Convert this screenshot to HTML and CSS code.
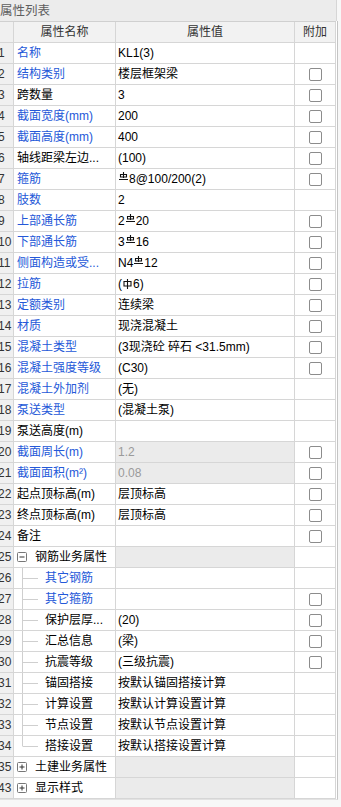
FILE: index.html
```html
<!DOCTYPE html>
<html lang="zh-CN">
<head>
  <meta charset="UTF-8">
  <meta name="viewport" content="width=device-width, initial-scale=1.0">
  <title>属性列表</title>
  <link rel="stylesheet" href="styles.css">
</head>
<body>

<div class="panel">
  <div class="title">属性列表</div>

  <div class="grid">
    <div class="row head">
      <div class="num"></div>
      <div class="hcell">属性名称</div>
      <div class="hcell">属性值</div>
      <div class="hcell">附加</div>
    </div>

    <div class="row"><div class="num">1</div><div class="name blue">名称</div><div class="val">KL1(3)</div><div class="add"></div></div>
    <div class="row"><div class="num">2</div><div class="name blue">结构类别</div><div class="val">楼层框架梁</div><div class="add"><span class="chk"></span></div></div>
    <div class="row"><div class="num">3</div><div class="name">跨数量</div><div class="val">3</div><div class="add"><span class="chk"></span></div></div>
    <div class="row"><div class="num">4</div><div class="name blue">截面宽度(mm)</div><div class="val">200</div><div class="add"><span class="chk"></span></div></div>
    <div class="row"><div class="num">5</div><div class="name blue">截面高度(mm)</div><div class="val">400</div><div class="add"><span class="chk"></span></div></div>
    <div class="row"><div class="num">6</div><div class="name">轴线距梁左边...</div><div class="val">(100)</div><div class="add"><span class="chk"></span></div></div>
    <div class="row"><div class="num">7</div><div class="name blue">箍筋</div><div class="val"><svg class="bar3" viewBox="0 0 9 8"><path d="M4.5 0V6M1.5 2.5H7.5V5H1.5ZM0 7.5H9"/></svg>8@100/200(2)</div><div class="add"><span class="chk"></span></div></div>
    <div class="row"><div class="num">8</div><div class="name blue">肢数</div><div class="val">2</div><div class="add"></div></div>
    <div class="row"><div class="num">9</div><div class="name blue">上部通长筋</div><div class="val">2<svg class="bar3" viewBox="0 0 9 8"><path d="M4.5 0V6M1.5 2.5H7.5V5H1.5ZM0 7.5H9"/></svg>20</div><div class="add"><span class="chk"></span></div></div>
    <div class="row"><div class="num">10</div><div class="name blue">下部通长筋</div><div class="val">3<svg class="bar3" viewBox="0 0 9 8"><path d="M4.5 0V6M1.5 2.5H7.5V5H1.5ZM0 7.5H9"/></svg>16</div><div class="add"><span class="chk"></span></div></div>
    <div class="row"><div class="num">11</div><div class="name blue">侧面构造或受...</div><div class="val">N4<svg class="bar3" viewBox="0 0 9 8"><path d="M4.5 0V6M1.5 2.5H7.5V5H1.5ZM0 7.5H9"/></svg>12</div><div class="add"><span class="chk"></span></div></div>
    <div class="row"><div class="num">12</div><div class="name blue">拉筋</div><div class="val">(<svg class="bar1" viewBox="0 0 9 10"><path d="M4.5 0V10M1 2.5H8V7H1Z"/></svg>6)</div><div class="add"><span class="chk"></span></div></div>
    <div class="row"><div class="num">13</div><div class="name blue">定额类别</div><div class="val">连续梁</div><div class="add"><span class="chk"></span></div></div>
    <div class="row"><div class="num">14</div><div class="name blue">材质</div><div class="val">现浇混凝土</div><div class="add"><span class="chk"></span></div></div>
    <div class="row"><div class="num">15</div><div class="name blue">混凝土类型</div><div class="val">(3现浇砼 碎石 &lt;31.5mm)</div><div class="add"><span class="chk"></span></div></div>
    <div class="row"><div class="num">16</div><div class="name blue">混凝土强度等级</div><div class="val">(C30)</div><div class="add"><span class="chk"></span></div></div>
    <div class="row"><div class="num">17</div><div class="name blue">混凝土外加剂</div><div class="val">(无)</div><div class="add"></div></div>
    <div class="row"><div class="num">18</div><div class="name blue">泵送类型</div><div class="val">(混凝土泵)</div><div class="add"></div></div>
    <div class="row"><div class="num">19</div><div class="name">泵送高度(m)</div><div class="val"></div><div class="add"></div></div>
    <div class="row"><div class="num">20</div><div class="name blue">截面周长(m)</div><div class="val ro">1.2</div><div class="add"><span class="chk"></span></div></div>
    <div class="row"><div class="num">21</div><div class="name blue">截面面积(m²)</div><div class="val ro">0.08</div><div class="add"><span class="chk"></span></div></div>
    <div class="row"><div class="num">22</div><div class="name">起点顶标高(m)</div><div class="val">层顶标高</div><div class="add"><span class="chk"></span></div></div>
    <div class="row"><div class="num">23</div><div class="name">终点顶标高(m)</div><div class="val">层顶标高</div><div class="add"><span class="chk"></span></div></div>
    <div class="row"><div class="num">24</div><div class="name">备注</div><div class="val"></div><div class="add"><span class="chk"></span></div></div>

    <div class="row"><div class="num">25</div><div class="name"><svg class="tog" viewBox="0 0 10 10"><rect x="0.5" y="0.5" width="9" height="9" rx="1"/><path d="M2.5 5H7.5"/></svg>钢筋业务属性</div><div class="val ro"></div><div class="add"></div></div>
    <div class="row"><div class="num">26</div><div class="name child blue"><svg class="tree" viewBox="0 0 31 20"><path d="M8.5 0V20M9 10.5H24"/></svg>其它钢筋</div><div class="val"></div><div class="add"></div></div>
    <div class="row"><div class="num">27</div><div class="name child blue"><svg class="tree" viewBox="0 0 31 20"><path d="M8.5 0V20M9 10.5H24"/></svg>其它箍筋</div><div class="val"></div><div class="add"><span class="chk"></span></div></div>
    <div class="row"><div class="num">28</div><div class="name child"><svg class="tree" viewBox="0 0 31 20"><path d="M8.5 0V20M9 10.5H24"/></svg>保护层厚...</div><div class="val">(20)</div><div class="add"><span class="chk"></span></div></div>
    <div class="row"><div class="num">29</div><div class="name child"><svg class="tree" viewBox="0 0 31 20"><path d="M8.5 0V20M9 10.5H24"/></svg>汇总信息</div><div class="val">(梁)</div><div class="add"><span class="chk"></span></div></div>
    <div class="row"><div class="num">30</div><div class="name child"><svg class="tree" viewBox="0 0 31 20"><path d="M8.5 0V20M9 10.5H24"/></svg>抗震等级</div><div class="val">(三级抗震)</div><div class="add"><span class="chk"></span></div></div>
    <div class="row"><div class="num">31</div><div class="name child"><svg class="tree" viewBox="0 0 31 20"><path d="M8.5 0V20M9 10.5H24"/></svg>锚固搭接</div><div class="val">按默认锚固搭接计算</div><div class="add"></div></div>
    <div class="row"><div class="num">32</div><div class="name child"><svg class="tree" viewBox="0 0 31 20"><path d="M8.5 0V20M9 10.5H24"/></svg>计算设置</div><div class="val">按默认计算设置计算</div><div class="add"></div></div>
    <div class="row"><div class="num">33</div><div class="name child"><svg class="tree" viewBox="0 0 31 20"><path d="M8.5 0V20M9 10.5H24"/></svg>节点设置</div><div class="val">按默认节点设置计算</div><div class="add"></div></div>
    <div class="row"><div class="num">34</div><div class="name child"><svg class="tree" viewBox="0 0 31 20"><path d="M8.5 0V10.5M9 10.5H24"/></svg>搭接设置</div><div class="val">按默认搭接设置计算</div><div class="add"></div></div>

    <div class="row"><div class="num">35</div><div class="name"><svg class="tog" viewBox="0 0 10 10"><rect x="0.5" y="0.5" width="9" height="9" rx="1"/><path d="M2.5 5H7.5M5 2.5V7.5"/></svg>土建业务属性</div><div class="val ro"></div><div class="add"></div></div>
    <div class="row"><div class="num">43</div><div class="name"><svg class="tog" viewBox="0 0 10 10"><rect x="0.5" y="0.5" width="9" height="9" rx="1"/><path d="M2.5 5H7.5M5 2.5V7.5"/></svg>显示样式</div><div class="val ro"></div><div class="add"></div></div>
  </div>
</div>

</body>
</html>
```

FILE: styles.css
```css
body {
  margin: 0;
  font-family: "Liberation Sans", "Noto Sans CJK SC", sans-serif;
  font-size: 12px;
  color: #000;
  background: #fff;
}
.panel {
  width: 341px;
  height: 807px;
  background: #f7f7f7;
  overflow: hidden;
}
.title {
  width: 337px;
  height: 21px;
  box-sizing: border-box;
  padding-top: 1px;
  line-height: 20px;
  font-size: 12.5px;
  color: #5e5e5e;
  background: #ececec;
  border-right: 1px solid #d6d6d6;
}
.grid {
  width: 338px;
  box-sizing: border-box;
  padding-right: 1px;
  background: #fff;
  border-right: 1px solid #c4c4c4;
  border-bottom: 1px solid #e2e2e2;
}
.row {
  display: grid;
  grid-template-columns: 14px 102px 179px 41px;
  height: 21px;
  box-sizing: border-box;
  border-bottom: 1px solid #d6d6d6;
}
.row > div {
  border-right: 1px solid #d6d6d6;
  line-height: 20px;
  white-space: nowrap;
  overflow: hidden;
}
.head {
  height: 22px;
  border-top: 1px solid #d0d0d0;
  background: #f2f2f2;
  color: #333;
}
.hcell {
  text-align: center;
}
.num {
  background: #f0f0f0;
  color: #333;
  text-indent: -2px;
}
.name {
  padding-left: 3px;
  display: flex;
  align-items: center;
}
.blue {
  color: #2458d8;
}
.val {
  padding-left: 2px;
}
.ro {
  background: #ebebeb;
  color: #9a9a9a;
}
.add {
  display: flex;
  align-items: center;
  justify-content: center;
}
.chk {
  width: 13px;
  height: 13px;
  box-sizing: border-box;
  border: 1px solid #8c8c8c;
  border-radius: 2px;
  background: #fff;
}
.bar3 {
  width: 9px;
  height: 8px;
  margin: 0 1px;
  vertical-align: 3px;
}
.bar1 {
  width: 9px;
  height: 10px;
  margin: 0 1px;
  vertical-align: -1px;
}
.bar3 path, .bar1 path {
  fill: none;
  stroke: #111;
  stroke-width: 1.1;
}
.tog {
  width: 10px;
  height: 10px;
  margin-right: 8px;
  flex: none;
}
.tog rect {
  fill: #fff;
  stroke: #777;
}
.tog path {
  stroke: #333;
}
.child {
  padding-left: 0;
}
.tree {
  width: 31px;
  height: 20px;
  flex: none;
}
.tree path {
  fill: none;
  stroke: #cfcfcf;
}
```
